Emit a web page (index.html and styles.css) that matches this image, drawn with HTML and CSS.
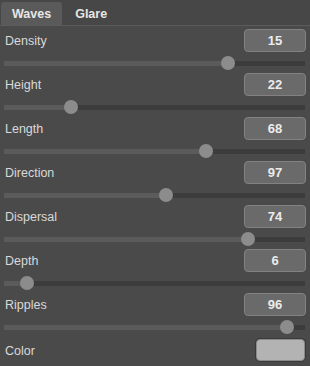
FILE: index.html
```html
<!DOCTYPE html>
<html>
<head>
<meta charset="utf-8">
<link rel="stylesheet" href="styles.css">
</head>
<body>
<div class="panel">
  <div class="tabs">
    <div class="tab active">Waves</div>
    <div class="tab">Glare</div>
  </div>
  <div class="content">
    <div class="param">
      <div class="head"><span class="label">Density</span><span class="value">15</span></div>
      <div class="slider"><div class="track"><div class="fill" style="width:224px"></div><div class="thumb" style="left:224px"></div></div></div>
    </div>
    <div class="param">
      <div class="head"><span class="label">Height</span><span class="value">22</span></div>
      <div class="slider"><div class="track"><div class="fill" style="width:67px"></div><div class="thumb" style="left:67px"></div></div></div>
    </div>
    <div class="param">
      <div class="head"><span class="label">Length</span><span class="value">68</span></div>
      <div class="slider"><div class="track"><div class="fill" style="width:202px"></div><div class="thumb" style="left:202px"></div></div></div>
    </div>
    <div class="param">
      <div class="head"><span class="label">Direction</span><span class="value">97</span></div>
      <div class="slider"><div class="track"><div class="fill" style="width:162px"></div><div class="thumb" style="left:162px"></div></div></div>
    </div>
    <div class="param">
      <div class="head"><span class="label">Dispersal</span><span class="value">74</span></div>
      <div class="slider"><div class="track"><div class="fill" style="width:244px"></div><div class="thumb" style="left:244px"></div></div></div>
    </div>
    <div class="param">
      <div class="head"><span class="label">Depth</span><span class="value">6</span></div>
      <div class="slider"><div class="track"><div class="fill" style="width:23px"></div><div class="thumb" style="left:23px"></div></div></div>
    </div>
    <div class="param">
      <div class="head"><span class="label">Ripples</span><span class="value">96</span></div>
      <div class="slider"><div class="track"><div class="fill" style="width:283px"></div><div class="thumb" style="left:283px"></div></div></div>
    </div>
    <div class="color-row">
      <span class="label">Color</span>
      <span class="swatch"></span>
    </div>
  </div>
</div>
</body>
</html>
```
FILE: styles.css
```css
html, body {
  margin: 0;
  padding: 0;
  background: #4a4a4a;
}
.panel {
  width: 310px;
  height: 366px;
  background: #4a4a4a;
  font-family: "Liberation Sans", Arial, sans-serif;
  font-size: 12.5px;
  color: #dcdcdc;
  overflow: hidden;
}
.tabs {
  display: flex;
  gap: 2px;
  height: 26px;
  padding-left: 1px;
  box-sizing: border-box;
  align-items: flex-end;
  border-bottom: 1px solid #5c5c5c;
  background: #474747;
}
.tab {
  height: 23px;
  line-height: 24px;
  padding: 0 11px;
  font-weight: bold;
  font-size: 12.5px;
  color: #e6e6e6;
  border-radius: 3px 3px 0 0;
}
.tab.active {
  background: #5a5a5a;
}
.content {
  padding: 3px 4px 0 4px;
}
.param {
  display: flex;
  flex-direction: column;
}
.head {
  display: flex;
  justify-content: space-between;
  align-items: center;
  height: 23px;
}
.label {
  padding-left: 1px;
  padding-top: 1px;
  color: #d9d9d9;
}
.value {
  box-sizing: border-box;
  width: 62px;
  height: 23px;
  line-height: 21px;
  text-align: center;
  background: #6a6a6a;
  border: 1px solid #828282;
  border-radius: 4px;
  font-weight: bold;
  font-size: 13px;
  color: #ececec;
}
.slider {
  height: 21px;
  display: flex;
  align-items: center;
}
.track {
  position: relative;
  width: 301px;
  height: 5px;
  margin-top: 2px;
  background: #3c3c3c;
}
.fill {
  height: 100%;
  background: #5b5b5b;
}
.thumb {
  position: absolute;
  top: -5px;
  width: 14px;
  height: 14px;
  margin-left: -7px;
  border-radius: 50%;
  background: #8c8c8c;
}
.color-row {
  display: flex;
  justify-content: space-between;
  align-items: center;
  height: 26px;
}
.swatch {
  box-sizing: border-box;
  width: 49px;
  height: 22px;
  margin-right: 1px;
  background: #b3b3b3;
  border: 1px solid #8a8a8a;
  box-shadow: 0 0 0 1px #3a3a3a;
  border-radius: 4px;
}
```
